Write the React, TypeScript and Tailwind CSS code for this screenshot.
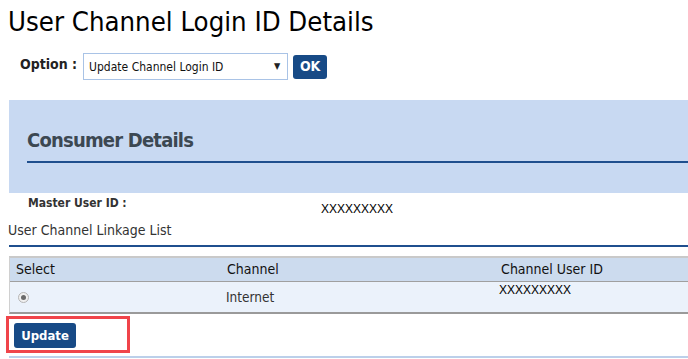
import React from "react";

const F = { fontFamily: "'DejaVu Sans Condensed', 'DejaVu Sans', sans-serif" };

export default function App() {
  return (
    <div className="w-[688px] h-[359px] overflow-hidden bg-white text-[#222]" style={F}>
      <h1 className="pl-[8px] pt-[6px] h-[48px] text-[27.3px] leading-[32px] text-black font-normal">
        User Channel Login ID Details
      </h1>
      <div className="flex items-center pl-[20px] h-[27px] mt-[5px]">
        <span className="text-[14px] font-bold text-[#222] mr-[6px] -mt-[4px]">Option :</span>
        <div className="relative w-[205px] h-[27px] border border-[#a9c3e6] bg-white flex items-center pl-[5px]">
          <span className="text-[12px] text-[#111]">Update Channel Login ID</span>
          <span className="absolute right-[7px] top-[6px] text-[9px] text-[#222]">▼</span>
        </div>
        <button className="ml-[5px] w-[34px] h-[24px] rounded-[3px] bg-[#174a86] text-white text-[14px] font-bold flex items-center justify-center">
          OK
        </button>
      </div>
      <div className="ml-[9px] mt-[20px] h-[93px] bg-[#c8d9f2] pl-[18px] pt-[27px]">
        <div className="border-b-2 border-[#1f4f8e] h-[36px]">
          <h2 className="text-[20px] font-bold text-[#3c4852] leading-[26px] tracking-[-0.8px]">Consumer Details</h2>
        </div>
      </div>
      <div className="flex h-[23px] pl-[28px]">
        <span className="w-[293px] text-[12px] font-bold text-[#333] pt-[1px]">Master User ID :</span>
        <span className="pt-[7px] text-[12px] text-black" style={{ fontFamily: "'Liberation Sans', Arial, sans-serif" }}>
          XXXXXXXXX
        </span>
      </div>
      <div className="pl-[8px] h-[29px] pt-[6px] text-[14px] font-normal text-[#333] leading-[16px]">
        User Channel Linkage List
      </div>
      <div className="ml-[9px] border-t-2 border-[#1f4f8e]"></div>
      <div className="ml-[9px] mt-[9px] border-t-2 border-b-2 border-l border-t-[#c9c9c9] border-b-[#9a9a9a] border-l-[#d0d0d0]">
        <div className="grid grid-cols-[211px_196px_1fr] h-[24px] bg-[#ccdbee] border-b border-[#a0a0a0] items-center text-[14px] font-normal text-[#111]">
          <span className="pl-[6px]">Select</span>
          <span className="pl-[6px]">Channel</span>
          <span className="text-center pr-[1px]">Channel User ID</span>
        </div>
        <div className="grid grid-cols-[211px_196px_1fr] h-[30px] bg-[#ebf2fb] text-[13.5px] text-[#333]">
          <div className="flex items-center pl-[8px]">
            <span className="w-[11px] h-[11px] rounded-full border border-[#b5b5b5] bg-[#f0f0f0] flex items-center justify-center">
              <span className="w-[5px] h-[5px] rounded-full bg-[#6a6a6a]"></span>
            </span>
          </div>
          <div className="flex items-center pl-[5px]">Internet</div>
          <div className="pl-[82px] pt-[1px] text-[12px] text-black leading-[14px]" style={{ fontFamily: "'Liberation Sans', Arial, sans-serif" }}>
            XXXXXXXXX
          </div>
        </div>
      </div>
      <div className="flex h-[42px] pt-[2px]">
        <div className="ml-[6px] w-[124px] h-[37px] border-[3px] border-[#f0444a] pl-[5px] pt-[4px]">
          <button className="w-[62px] h-[25px] rounded-[3px] bg-[#174a86] text-white text-[13px] font-bold flex items-center justify-center">
            Update
          </button>
        </div>
      </div>
      <div className="ml-[9px] border-t-2 border-[#bcd0ea]"></div>
    </div>
  );
}
